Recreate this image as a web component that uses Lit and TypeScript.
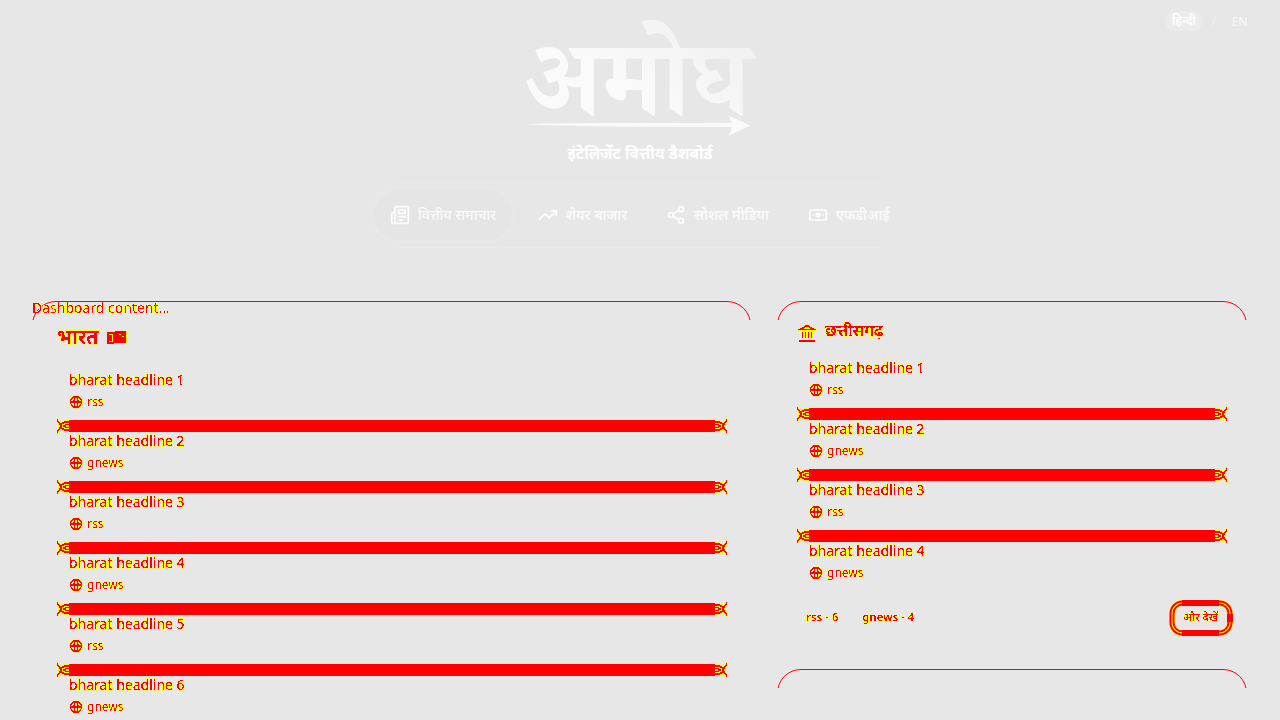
import { LitElement, html, css, svg } from "lit";
import { customElement } from "lit/decorators.js";

const globe = html`<svg class="globe" width="14" height="14" viewBox="0 0 24 24"><circle cx="12" cy="12" r="9.5"/><path d="M12 2.500a12 13 0 0 0 0 19 12 13 0 0 0 0-19M2 12h20"/></svg>`;
const paths: Record<string, unknown> = {
  news: svg`<path d="M4 22h16a2 2 0 0 0 2-2V4a2 2 0 0 0-2-2H8a2 2 0 0 0-2 2v16a2 2 0 0 1-2 2Zm0 0a2 2 0 0 1-2-2v-9c0-1.1.9-2 2-2h2"/><path d="M18 14h-8M15 18h-5M10 6h8v4h-8V6Z"/>`,
  trend: svg`<path d="m22 7-8.5 8.5-5-5L2 17"/><path d="M16 7h6v6"/>`,
  share: svg`<circle cx="18" cy="5" r="3"/><circle cx="6" cy="12" r="3"/><circle cx="18" cy="19" r="3"/><path d="m8.59 13.51 6.83 3.98M15.41 6.51l-6.82 3.98"/>`,
  cash: svg`<rect width="20" height="12" x="2" y="6" rx="2"/><circle cx="12" cy="12" r="2"/><path d="M6 12h.01M18 12h.01"/>`,
};
const tabs = [["news", "वित्तीय समाचार"], ["trend", "शेयर बाजार"], ["share", "सोशल मीडिया"], ["cash", "एफडीआई"]];

// Upper half of a bar's end ornament: Y is yellow, R is red; the lower half mirrors it.
const capTop = [
  "Y...........",
  "RY..........",
  "RY.....YYYYY",
  "RRY.YYYRRRRR",
  "YRRYYRRRRRRR",
  ".YRRRRRYYYYY",
  ".YRRRYYYRRRR",
  ".YYRRYRRRYYY",
];
const capRows = [...capTop, ...[...capTop].reverse()];
const cells = (c: string) => capRows.map((row, y) => [...row].map((v, x) => (v === c ? `M${x} ${y}h1v1h-1z` : "")).join("")).join("");
const yellow = cells("Y");
const red = cells("R");
const cap = (flip: boolean) => html`<svg class=${flip ? "cap flip" : "cap"} width="12" height="16" viewBox="0 0 12 16" shape-rendering="crispEdges"><path fill="#ff0" d=${yellow}/><path fill="#f00" d=${red}/></svg>`;

const headlines = (n: number) => Array.from({ length: n }, (_, i) => html`
  <div class="item">
    <div class="title fx">bharat headline ${i + 1}</div>
    <div class="source fx">${globe}<span>${i % 2 ? "gnews" : "rss"}</span></div>
  </div>
  ${i < n - 1 ? html`<div class="bar">${cap(false)}<i></i>${cap(true)}</div>` : ""}`);

@customElement("app-root")
export class AppRoot extends LitElement {
  static styles = css`
    :host { display: block; height: 720px; overflow: hidden; background: #e7e7e7; font-family: "Noto Sans", "Noto Sans Devanagari", sans-serif; }
    * { box-sizing: border-box; }
    .page { position: relative; }
    .defs { position: absolute; width: 0; height: 0; }
    .fx { filter: url(#edge); color: #000; -webkit-text-stroke: 0.3px #000; }
    .lang { position: absolute; right: 15px; top: 6px; width: 109px; height: 31px; border: 1px solid #e9e9e9; border-radius: 16px; display: flex; align-items: center; padding: 0 0 1px 8px; font-size: 12px; font-weight: 500; color: #f6f6f6; }
    .lang b { width: 38px; height: 20px; line-height: 20px; border-radius: 10px; background: #ebebeb; text-align: center; font-weight: 600; color: #fff; }
    .lang .sep { width: 21px; text-align: center; color: #efefef; }
    .lang .en { width: 31px; text-align: center; }
    header { display: flex; flex-direction: column; align-items: center; height: 301px; }
    .logo { display: block; height: 140px; flex: none; overflow: visible; }
    .logo text { font-family: "Noto Serif Devanagari", "Noto Sans Devanagari", "Noto Sans", serif; }
    h1 { margin: 0; height: 26px; line-height: 26px; font-size: 16px; font-weight: 600; color: #fff; -webkit-text-stroke: 0.2px #fff; }
    nav { display: flex; align-items: center; margin-top: 16px; width: 548px; height: 66px; border: 1px solid #eaeaea; border-radius: 33px; padding-left: 7px; flex: none; }
    .tab { display: flex; align-items: center; gap: 8px; height: 50px; padding: 0 16px; margin-right: 6.8px; font-size: 14px; line-height: 20px; font-weight: 600; color: #f9f9f9; white-space: nowrap; border-radius: 25px; }
    .tab span { padding-bottom: 1px; }
    .tab.on { background: #e5e5e5; box-shadow: 0 0 0 4px #e8e8e8; font-weight: 500; margin-right: 9.5px; }
    .tab svg { fill: none; stroke: #fdfdfd; stroke-width: 2; stroke-linecap: round; stroke-linejoin: round; }
    main { display: grid; grid-template-columns: 719px 470px; gap: 26px; padding-left: 32px; align-items: start; }
    .card { position: relative; height: 460px; padding: 0 24px 0 25px; }
    .card::before { content: ""; position: absolute; inset: 0; border: 1px solid #f00; border-radius: 24px; clip-path: inset(0 0 calc(100% - 19px) 0); }
    .side .card { height: 342px; padding: 0 20px; }
    .side { display: grid; gap: 26px; }
    .loading { position: absolute; left: 0; top: -4px; font-size: 14px; line-height: 22px; -webkit-text-stroke-width: 0.15px; }
    .head { display: flex; align-items: center; gap: 8px; font-weight: 600; }
    .wide .head { height: 50px; padding-top: 22px; font-size: 20px; line-height: 28px; margin-bottom: 17px; gap: 9px; }
    .side .head { height: 44px; padding-top: 20px; font-size: 16px; line-height: 24px; margin-bottom: 11px; }
    .side .head span { padding-bottom: 6px; }
    .item { height: 52px; padding: 0 12px; }
    .title { height: 24px; line-height: 24px; font-size: 14px; }
    .source { display: flex; align-items: center; gap: 4px; height: 20px; line-height: 20px; font-size: 12px; -webkit-text-stroke-width: 0.2px; }
    .globe { fill: none; stroke: #000; stroke-width: 2.3; }
    .bar { height: 12px; margin-bottom: -3px; display: flex; align-items: center; }
    .bar i { flex: 1; height: 12px; background: #f00; }
    .cap { flex: none; margin: -2px 0; }
    .flip { transform: scaleX(-1); }
    .foot { display: flex; align-items: center; height: 36px; margin: 9px -6px 0 0; padding-left: 9px; font-size: 11px; font-weight: 600; gap: 24px; }
    .foot > span { padding-bottom: 3px; letter-spacing: 0.25px; -webkit-text-stroke-width: 0.2px; }
    .more { margin-left: auto; width: 64px; height: 36px; display: grid; place-items: center; font-size: 11px; }
    .more > * { grid-area: 1 / 1; }
    .more span { padding-bottom: 4px; margin-right: 1px; -webkit-text-stroke-width: 0.1px; }
  `;

  render() {
    return html`<div class="page">
      <svg class="defs"><filter id="edge" x="-5%" y="-20%" width="110%" height="140%" color-interpolation-filters="sRGB">
        <feColorMatrix values="0 0 0 0 1  0 0 0 1 0  0 0 0 0 0  0 0 0 1 0"/>
        <feComponentTransfer><feFuncG type="discrete" tableValues="1 1 1 1 1 0 0 0"/><feFuncA type="discrete" tableValues="0 1 1 1 1 1 1 1 1 1 1 1"/></feComponentTransfer>
      </filter></svg>
      <div class="lang"><b>हिन्दी</b><span class="sep">/</span><span class="en">EN</span></div>
      <header>
        <svg class="logo" width="240" height="140" viewBox="520 0 240 140">
          <defs><linearGradient id="g" gradientUnits="userSpaceOnUse" x1="720" y1="-90" x2="670" y2="0"><stop stop-color="#f0f0f0"/><stop offset="1" stop-color="#fafafa"/></linearGradient></defs>
          <text transform="translate(0 115) scale(1 1.12)" x="525" y="0" font-size="96" font-weight="700" textLength="225" lengthAdjust="spacingAndGlyphs" fill="url(#g)">अमोघ</text>
          <path fill="#fafafa" d="M526 124.500 540 123.500 600 123 732 123 728.500 115.500 750.500 125.500 729 135.500 732 127 600 126.500Z"/>
        </svg>
        <h1>इंटेलिजेंट वित्तीय डैशबोर्ड</h1>
        <nav>${tabs.map(([k, t], i) => html`<div class=${i ? "tab" : "tab on"}><svg width="20" height="20" viewBox="0 0 24 24">${paths[k]}</svg><span>${t}</span></div>`)}</nav>
      </header>
      <main>
        <section class="card wide">
          <div class="loading fx">Dashboard content...</div>
          <div class="head"><span class="fx">भारत</span><svg width="20" height="13" shape-rendering="crispEdges"><path fill="#ff0" d="M0 0h9l4-1h7v13h-8l-4 1H0z"/><path fill="#f00" d="M0 1h8V0h11v12H7v1H0z"/><path fill="#ff0" d="M2 3h4v1H2zM5 4h1v7H5zM2 10h3v1H2zM12 3h2v1h-2zM15 5h2v1h-2z"/></svg></div>
          ${headlines(6)}
        </section>
        <div class="side">
          <section class="card">
            <div class="head"><svg class="fx" width="20" height="20" viewBox="0 0 24 24" fill="none" stroke="#000" stroke-width="2"><path d="M3 8 12 3l9 5ZM6.600 11v7M10.200 11v7M13.800 11v7M17.400 11v7M2.500 21.600h19"/></svg><span class="fx">छत्तीसगढ़</span></div>
            ${headlines(4)}
            <div class="foot"><span class="fx">rss · 6</span><span class="fx">gnews · 4</span>
              <div class="more">
                <svg width="64" height="36" viewBox="0 0 64 36" fill="none">
                  <rect x="3" y="3" width="58" height="30" rx="10.500" stroke="#ff0" stroke-width="6"/>
                  <rect x="1.500" y="1.500" width="61" height="33" rx="12" stroke="#f00" stroke-width="2"/>
                  <rect x="4.500" y="4.500" width="55" height="27" rx="9" stroke="#f00" stroke-width="2"/>
                  <path fill="#f00" d="M13 0h37v6H13zM13 30h37v6H13zM58 14h6v8h-6z"/>
                </svg>
                <span class="fx">और देखें</span>
              </div>
            </div>
          </section>
          <section class="card"></section>
        </div>
      </main>
    </div>`;
  }
}
